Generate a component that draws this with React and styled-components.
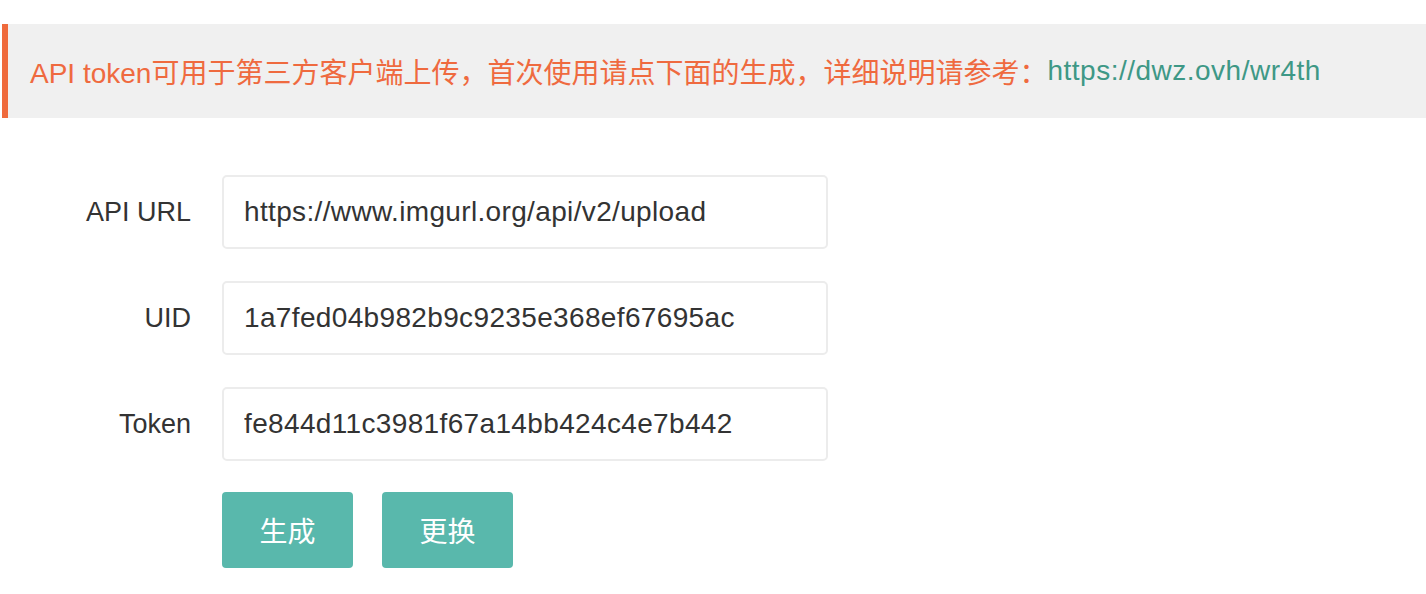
import React from 'react'
import styled, { createGlobalStyle } from 'styled-components'

const GlobalStyle = createGlobalStyle`
  html, body {
    margin: 0;
    padding: 0;
    background: #fff;
  }
  body {
    font-family: "Liberation Sans", "Noto Sans CJK SC", sans-serif;
    color: #333;
  }
`

const Page = styled.div`
  padding: 24px 0 0 2px;
`

const Quote = styled.blockquote`
  margin: 0;
  height: 94px;
  box-sizing: border-box;
  display: flex;
  align-items: center;
  padding-left: 22px;
  border-left: 6px solid #ef6a3c;
  background: #f0f0f0;
  color: #ef6a3f;
  font-size: 28px;
  white-space: nowrap;

  a {
    color: #3e9886;
    text-decoration: none;
    letter-spacing: 0.5px;
  }
`

const Form = styled.form`
  margin-top: 57px;
  display: flex;
  flex-direction: column;
  gap: 32px;
`

const Row = styled.div`
  display: grid;
  grid-template-columns: 189px 606px;
  column-gap: 31px;
  align-items: center;
`

const Label = styled.label`
  text-align: right;
  font-size: 27px;
  color: #333;
`

const Input = styled.input`
  height: 74px;
  box-sizing: border-box;
  border: 2px solid #ececec;
  border-radius: 5px;
  padding: 0 20px;
  font-family: inherit;
  font-size: 28px;
  letter-spacing: 0.35px;
  color: #333;
  outline: none;
  background: #fff;
`

const Actions = styled.div`
  margin-left: 220px;
  margin-top: -1px;
  display: flex;
  gap: 29px;
`

const Button = styled.button`
  width: 131px;
  height: 76px;
  border: none;
  border-radius: 4px;
  background: #59b8ac;
  color: #fff;
  font-family: inherit;
  font-size: 28px;
  cursor: pointer;
`

const fields = [
  { label: 'API URL', value: 'https://www.imgurl.org/api/v2/upload' },
  { label: 'UID', value: '1a7fed04b982b9c9235e368ef67695ac' },
  { label: 'Token', value: 'fe844d11c3981f67a14bb424c4e7b442' },
]

export default function App() {
  return (
    <Page>
      <GlobalStyle />
      <Quote>
        API token可用于第三方客户端上传，首次使用请点下面的生成，详细说明请参考：
        <a href="#">https://dwz.ovh/wr4th</a>
      </Quote>
      <Form onSubmit={e => e.preventDefault()}>
        {fields.map(f => (
          <Row key={f.label}>
            <Label>{f.label}</Label>
            <Input defaultValue={f.value} />
          </Row>
        ))}
        <Actions>
          <Button type="button">生成</Button>
          <Button type="button">更换</Button>
        </Actions>
      </Form>
    </Page>
  )
}
